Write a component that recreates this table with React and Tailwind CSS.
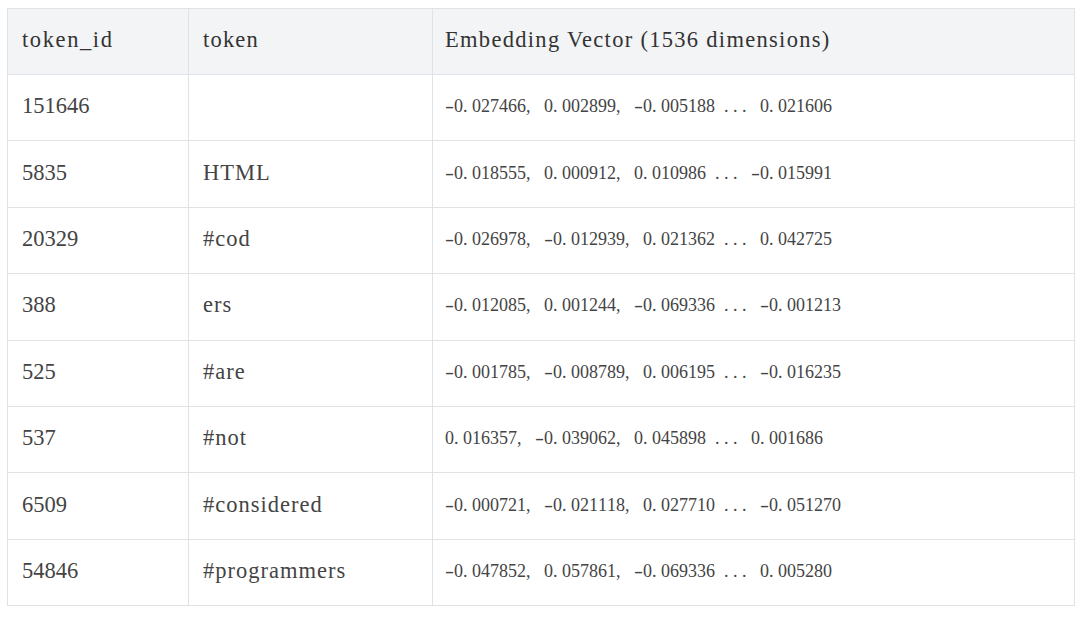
const rows = [
    ['151646', '', '-0.027466, 0.002899, -0.005188 ... 0.021606'],
    ['5835', 'HTML', '-0.018555, 0.000912, 0.010986 ... -0.015991'],
    ['20329', '#cod', '-0.026978, -0.012939, 0.021362 ... 0.042725'],
    ['388', 'ers', '-0.012085, 0.001244, -0.069336 ... -0.001213'],
    ['525', '#are', '-0.001785, -0.008789, 0.006195 ... -0.016235'],
    ['537', '#not', '0.016357, -0.039062, 0.045898 ... 0.001686'],
    ['6509', '#considered', '-0.000721, -0.021118, 0.027710 ... -0.051270'],
    ['54846', '#programmers', '-0.047852, 0.057861, -0.069336 ... 0.005280'],
];

// half-width cells so the numbers keep the fixed pitch of the original font
function Mono({ text }) {
    return (
        <span className="whitespace-nowrap">
            {text.split('').map((c, i) =>
                c === '-' ? (
                    <span key={i} className="inline-block w-[0.5em] origin-left scale-x-150 text-left">
                        -
                    </span>
                ) : (
                    <span key={i} className="inline-block w-[0.5em] text-left">
                        {c === ' ' ? '\u00a0' : c}
                    </span>
                )
            )}
        </span>
    );
}

export default function App() {
    return (
        <main className="min-h-screen bg-white pl-[7px] pt-[8px] pr-[6px] font-['Liberation_Serif','Noto_Sans_CJK_SC',serif] text-[#444]">
            <table className="w-[1068px] table-fixed border-collapse">
                <colgroup>
                    <col className="w-[181px]" />
                    <col className="w-[244px]" />
                    <col />
                </colgroup>
                <thead>
                    <tr className="h-[66px] bg-[#f3f4f6] text-left">
                        <th className="border border-[#dfe2e6] pb-[3px] pl-[14px] text-[22.5px] font-normal tracking-[1.6px] text-[#333]">
                            token_id
                        </th>
                        <th className="border border-[#dfe2e6] pb-[3px] pl-[14px] text-[22.5px] font-normal tracking-[1.2px] text-[#333]">
                            token
                        </th>
                        <th className="border border-[#dfe2e6] pb-[3px] pl-[12px] text-[22.5px] font-normal tracking-[1.3px] text-[#333]">
                            Embedding Vector (1536 dimensions)
                        </th>
                    </tr>
                </thead>
                <tbody>
                    {rows.map(([id, token, vec]) => (
                        <tr key={id} className="h-[66.4px]">
                            <td className="border border-[#dfe2e6] pb-[3px] pl-[14px] text-[22.5px]">
                                <Mono text={id} />
                            </td>
                            <td className="border border-[#dfe2e6] pb-[3px] pl-[14px] text-[22.5px] tracking-[1px]">{token}</td>
                            <td className="border border-[#dfe2e6] pb-[2px] pl-[12px] text-[18px]">
                                <Mono text={vec} />
                            </td>
                        </tr>
                    ))}
                </tbody>
            </table>
        </main>
    );
}
